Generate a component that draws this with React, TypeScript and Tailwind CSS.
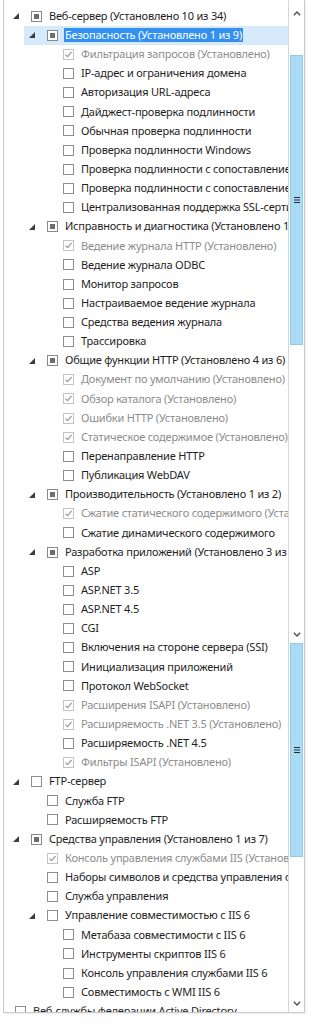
import React from "react"

type CheckState = "none" | "checked" | "partial"

interface TreeRow {
  level: number
  label: string
  state: CheckState
  expander?: boolean
  selected?: boolean
}

const rows: TreeRow[] = [
  { level: 0, label: "Веб-сервер (Установлено 10 из 34)", state: "partial", expander: true },
  { level: 1, label: "Безопасность (Установлено 1 из 9)", state: "partial", expander: true, selected: true },
  { level: 2, label: "Фильтрация запросов (Установлено)", state: "checked" },
  { level: 2, label: "IP-адрес и ограничения домена", state: "none" },
  { level: 2, label: "Авторизация URL-адреса", state: "none" },
  { level: 2, label: "Дайджест-проверка подлинности", state: "none" },
  { level: 2, label: "Обычная проверка подлинности", state: "none" },
  { level: 2, label: "Проверка подлинности Windows", state: "none" },
  { level: 2, label: "Проверка подлинности с сопоставлением сертификата клиента", state: "none" },
  { level: 2, label: "Проверка подлинности с сопоставлением сертификата клиента IIS", state: "none" },
  { level: 2, label: "Централизованная поддержка SSL-сертификатов", state: "none" },
  { level: 1, label: "Исправность и диагностика (Установлено 1 из 6)", state: "partial", expander: true },
  { level: 2, label: "Ведение журнала HTTP (Установлено)", state: "checked" },
  { level: 2, label: "Ведение журнала ODBC", state: "none" },
  { level: 2, label: "Монитор запросов", state: "none" },
  { level: 2, label: "Настраиваемое ведение журнала", state: "none" },
  { level: 2, label: "Средства ведения журнала", state: "none" },
  { level: 2, label: "Трассировка", state: "none" },
  { level: 1, label: "Общие функции HTTP (Установлено 4 из 6)", state: "partial", expander: true },
  { level: 2, label: "Документ по умолчанию (Установлено)", state: "checked" },
  { level: 2, label: "Обзор каталога (Установлено)", state: "checked" },
  { level: 2, label: "Ошибки HTTP (Установлено)", state: "checked" },
  { level: 2, label: "Статическое содержимое (Установлено)", state: "checked" },
  { level: 2, label: "Перенаправление HTTP", state: "none" },
  { level: 2, label: "Публикация WebDAV", state: "none" },
  { level: 1, label: "Производительность (Установлено 1 из 2)", state: "partial", expander: true },
  { level: 2, label: "Сжатие статического содержимого (Установлено)", state: "checked" },
  { level: 2, label: "Сжатие динамического содержимого", state: "none" },
  { level: 1, label: "Разработка приложений (Установлено 3 из 11)", state: "partial", expander: true },
  { level: 2, label: "ASP", state: "none" },
  { level: 2, label: "ASP.NET 3.5", state: "none" },
  { level: 2, label: "ASP.NET 4.5", state: "none" },
  { level: 2, label: "CGI", state: "none" },
  { level: 2, label: "Включения на стороне сервера (SSI)", state: "none" },
  { level: 2, label: "Инициализация приложений", state: "none" },
  { level: 2, label: "Протокол WebSocket", state: "none" },
  { level: 2, label: "Расширения ISAPI (Установлено)", state: "checked" },
  { level: 2, label: "Расширяемость .NET 3.5 (Установлено)", state: "checked" },
  { level: 2, label: "Расширяемость .NET 4.5", state: "none" },
  { level: 2, label: "Фильтры ISAPI (Установлено)", state: "checked" },
  { level: 0, label: "FTP-сервер", state: "none", expander: true },
  { level: 1, label: "Служба FTP", state: "none" },
  { level: 1, label: "Расширяемость FTP", state: "none" },
  { level: 0, label: "Средства управления (Установлено 1 из 7)", state: "partial", expander: true },
  { level: 1, label: "Консоль управления службами IIS (Установлено)", state: "checked" },
  { level: 1, label: "Наборы символов и средства управления службами IIS", state: "none" },
  { level: 1, label: "Служба управления", state: "none" },
  { level: 1, label: "Управление совместимостью с IIS 6", state: "none", expander: true },
  { level: 2, label: "Метабаза совместимости с IIS 6", state: "none" },
  { level: 2, label: "Инструменты скриптов IIS 6", state: "none" },
  { level: 2, label: "Консоль управления службами IIS 6", state: "none" },
  { level: 2, label: "Совместимость с WMI IIS 6", state: "none" },
  { level: -1, label: "Веб-службы федерации Active Directory", state: "none" },
]

// indent per level, written out so tailwind picks them up
const indent: Record<number, string> = {
  [-1]: "pl-[11px]",
  0: "pl-[7px]",
  1: "pl-[23px]",
  2: "pl-[39px]",
}

function Expander() {
  return (
    <svg width="6" height="6" viewBox="0 0 6 6" className="ml-[2px]">
      <polygon points="6,0 6,6 0,6" fill="#3c3c3c" />
    </svg>
  )
}

function CheckBox({ state }: { state: CheckState }) {
  if (state === "checked") {
    return (
      <div className="w-[11px] h-[11px] shrink-0 border border-[#c4c4c4] bg-white flex items-center justify-center">
        <svg width="9" height="9" viewBox="0 0 9 9">
          <path d="M1.5 4.6 L3.6 6.7 L7.6 1.8" fill="none" stroke="#9a9a9a" strokeWidth="1.2" />
        </svg>
      </div>
    )
  }
  if (state === "partial") {
    return (
      <div className="w-[11px] h-[11px] shrink-0 border border-[#8a8a8a] bg-white flex items-center justify-center">
        <div className="w-[5px] h-[5px] bg-[#6e6e6e]" />
      </div>
    )
  }
  return <div className="w-[11px] h-[11px] shrink-0 border border-[#8e8e8e] bg-white" />
}

function Row({ row }: { row: TreeRow }) {
  const installed = row.state === "checked"
  const pad = row.selected ? "ml-[20px] pl-[3px] bg-[#d5ebfb]" : indent[row.level]

  return (
    <div className={`h-[19.15px] flex items-center whitespace-nowrap ${pad}`}>
      {row.level >= 0 && (
        <div className="w-[20px] shrink-0 flex items-center">{row.expander && <Expander />}</div>
      )}
      <CheckBox state={row.state} />
      {row.selected ? (
        <span className="ml-[6px] px-[1px] leading-[14px] bg-[#3390f0] text-white">{row.label}</span>
      ) : (
        <span className={`ml-[7px] ${installed ? "text-[#8c8c8c]" : "text-[#1e1e1e]"}`}>{row.label}</span>
      )}
    </div>
  )
}

function Chevron({ up }: { up?: boolean }) {
  return (
    <svg width="8" height="5" viewBox="0 0 8 5">
      <path d={up ? "M0.8 4.3 L4 1.1 L7.2 4.3" : "M0.8 0.7 L4 3.9 L7.2 0.7"} fill="none" stroke="#505050" strokeWidth="1.4" />
    </svg>
  )
}

function Thumb({ height }: { height: string }) {
  return (
    <div className={`${height} mx-[1px] bg-[#a9dbf4] border border-[#8ccbeb] flex items-center justify-center`}>
      <svg width="6" height="6" viewBox="0 0 6 6">
        <path d="M0 0.5 H6 M0 3 H6 M0 5.5 H6" stroke="#2a2a2a" strokeWidth="1" />
      </svg>
    </div>
  )
}

function ScrollBar() {
  return (
    <div className="w-[16px] shrink-0 border-l border-[#d6d6d6] flex flex-col">
      <div className="h-[26px] flex items-center justify-center">
        <Chevron up />
      </div>
      <div className="h-[29px]" />
      <Thumb height="h-[290px]" />
      <div className="h-[281px]" />
      <div className="h-[17px] flex items-center justify-center">
        <Chevron />
      </div>
      <Thumb height="h-[214px]" />
      <div className="flex-1" />
      <div className="h-[17px] flex items-center justify-center">
        <Chevron />
      </div>
    </div>
  )
}

export default function App() {
  return (
    <div className="w-[319px] h-[1024px] bg-white overflow-hidden font-['Noto_Sans',sans-serif] text-[11px] tracking-[-0.2px]">
      <div className="ml-[3px] w-[302px] h-[1013px] flex border-l border-r border-b border-[#c9c9c9] shadow-[1px_1px_2px_rgba(0,0,0,0.08)]">
        <div className="flex-1 min-w-0 overflow-hidden pt-[6.5px]">
          {rows.map((row, i) => (
            <Row key={i} row={row} />
          ))}
        </div>
        <ScrollBar />
      </div>
    </div>
  )
}
